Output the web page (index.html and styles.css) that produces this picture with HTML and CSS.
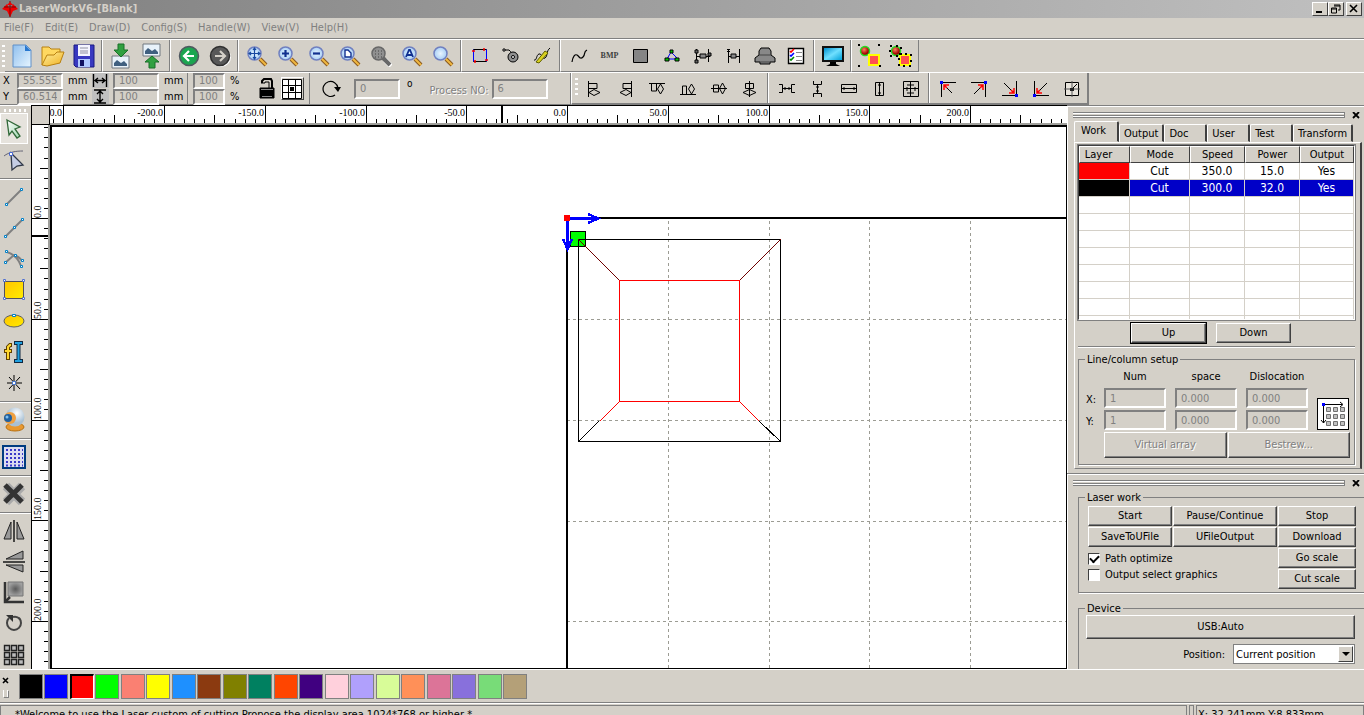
FILE: index.html
```html
<!DOCTYPE html>
<html lang="en">
<head>
<meta charset="utf-8">
<title>LaserWorkV6-[Blank]</title>
<link rel="stylesheet" href="styles.css">
</head>
<body>
<svg class="defs" aria-hidden="true">
  <defs>
    <linearGradient id="page" x1="0" y1="0" x2="1" y2="1"><stop offset="0" stop-color="#8fbfee"/><stop offset="1" stop-color="#e6f5ff"/></linearGradient>
    <linearGradient id="folder" x1="0" y1="0" x2="1" y2="1"><stop offset="0" stop-color="#fff0a0"/><stop offset="1" stop-color="#f0b020"/></linearGradient>
    <linearGradient id="gold" x1="0" y1="0" x2="1" y2="1"><stop offset="0" stop-color="#ffc400"/><stop offset="1" stop-color="#ffec00"/></linearGradient>
    <linearGradient id="screen" x1="0" y1="0" x2="1" y2="1"><stop offset="0" stop-color="#0090d0"/><stop offset=".5" stop-color="#70e0ff"/><stop offset="1" stop-color="#00a0d8"/></linearGradient>
    <linearGradient id="arrowgreen" x1="0" y1="0" x2="1" y2="1"><stop offset="0" stop-color="#fff"/><stop offset="1" stop-color="#a0d8b0"/></linearGradient>
    <radialGradient id="greenball"><stop offset="0" stop-color="#10b050"/><stop offset="1" stop-color="#20a050"/></radialGradient>
    <radialGradient id="lensfill"><stop offset="0" stop-color="#e8f4ff"/><stop offset="1" stop-color="#a8cff5"/></radialGradient>
    <radialGradient id="redball" cx=".4" cy=".35"><stop offset="0" stop-color="#ff8060"/><stop offset="1" stop-color="#a00000"/></radialGradient>
    <radialGradient id="whiteball" cx=".6" cy=".3"><stop offset="0" stop-color="#fff"/><stop offset="1" stop-color="#a8c0d4"/></radialGradient>
    <radialGradient id="graybox"><stop offset="0" stop-color="#5a5a5a"/><stop offset="1" stop-color="#a0a0a0"/></radialGradient>
    <g id="lens">
      <path d="M14 14l6 6" stroke="#8a5a20" stroke-width="4"/><path d="M14 14l6 6" stroke="#f0b840" stroke-width="2"/>
      <circle cx="8.500" cy="8.500" r="6.500" fill="url(#lensfill)" stroke="#7080c0" stroke-width="1.500"/>
    </g>
    <g id="picture"><path d="M0 0h17v12H0z" fill="#e8f2fa" stroke="#707880"/><path d="M2 10V7l3-3 4 3 3-2 3 3v2z" fill="#406080"/></g>
    <g id="selection">
      <circle cx="6" cy="6" r="4.500" fill="url(#redball)" stroke="#20e020" stroke-width="1.500"/>
      <path d="M10 10h10v10H10z" fill="#ff5050" stroke="#ff0" stroke-width="2"/>
    </g>
  </defs>
</svg>

<header class="titlebar">
  <svg class="logo" width="16" height="16" viewBox="0 0 16 16"><path d="M0 8l5-5 2 4h2l2-4 5 5-5 2-3 6-3-6z" fill="#f00000"/><path d="M8 0v16M2 6h12" stroke="#800000"/><path d="M8 1l3 3H5z" fill="#f00000"/></svg>
  <h1>LaserWorkV6-[Blank]</h1>
  <div class="winbuttons">
    <button aria-label="Minimize"><svg width="12" height="10"><path d="M2 8h6" stroke="#000" stroke-width="2"/></svg></button>
    <button aria-label="Restore"><svg width="12" height="10"><path d="M4 1h6v5H8M4 2h6M1.500 4h5v5h-5zM1 5h6" fill="none" stroke="#000"/></svg></button>
    <button class="close" aria-label="Close"><svg width="12" height="10"><path d="M2 1l7 7M9 1L2 8" stroke="#000" stroke-width="1.600"/></svg></button>
  </div>
</header>

<nav class="menubar">
  <button>File(F)</button><button>Edit(E)</button><button>Draw(D)</button><button>Config(S)</button><button>Handle(W)</button><button>View(V)</button><button>Help(H)</button>
</nav>

<div class="toolbar" role="toolbar" aria-label="Standard">
  <span class="grip"></span>
  <div class="group first">
    <button class="tool" aria-label="New"><svg width="22" height="24"><path d="M2 1h13l5 5v17H2z" fill="url(#page)" stroke="#6090c8"/><path d="M14 1v6h6z" fill="#2878d0"/></svg></button>
    <button class="tool" aria-label="Open"><svg width="24" height="24"><path d="M1 21V3h7l2 2h9v6" fill="#ffd860" stroke="#b88010"/><path d="M1 21l5-10h7l3-3h7l-4 11-13 3z" fill="url(#folder)" stroke="#b88010"/></svg></button>
    <button class="tool" aria-label="Save"><svg width="22" height="24"><path d="M1 1h20v22H3l-2-2z" fill="#3838c0" stroke="#181880"/><path d="M5 1h12v11H5z" fill="#f4f4ff"/><path d="M7 4h8M7 7h8M7 9h8" stroke="#9090a0"/><path d="M5 15h12v8H5z" fill="#b0c8ff"/><path d="M7 16h4v6H7z" fill="#101060"/></svg></button>
  </div>
  <div class="group">
    <button class="tool" aria-label="Import"><svg width="20" height="26"><use href="#picture" x="1" y="13"/><path d="M7 1h6v6h4l-7 7-7-7h4z" fill="#30a040" stroke="#187028"/></svg></button>
    <button class="tool" aria-label="Export"><svg width="20" height="26"><use href="#picture" x="1" y="1"/><path d="M7 25h6v-6h4l-7-6-7 6h4z" fill="#30a040" stroke="#187028"/></svg></button>
  </div>
  <div class="group">
    <button class="tool" aria-label="Undo"><svg width="24" height="24"><circle cx="12" cy="12" r="9.500" fill="url(#greenball)" stroke="#505860" stroke-width="1.500"/><path d="M17 12H8M12 7l-5 5 5 5" fill="none" stroke="#fff" stroke-width="2.200"/></svg></button>
    <button class="tool" aria-label="Redo"><svg width="24" height="24"><circle cx="13" cy="13" r="10" fill="#fff"/><circle cx="12" cy="12" r="9.500" fill="#585858" stroke="#303030" stroke-width="1.500"/><path d="M7 12h9M12 7l5 5-5 5" fill="none" stroke="#d4d0c8" stroke-width="2.200"/></svg></button>
  </div>
  <div class="group">
    <button class="tool" aria-label="Pan"><svg width="22" height="22"><use href="#lens"/><path d="M8.500 3v11M3 8.500h11M7 5l1.500-2L10 5M7 12l1.500 2 1.500-2M5 7L3 8.500 5 10M12 7l2 1.500-2 1.500" fill="none" stroke="#1848a0" stroke-width="1.200"/></svg></button>
    <button class="tool" aria-label="Zoom in"><svg width="22" height="22"><use href="#lens"/><path d="M5 8.500h7M8.500 5v7" stroke="#103090" stroke-width="2.200"/></svg></button>
    <button class="tool" aria-label="Zoom out"><svg width="22" height="22"><use href="#lens"/><path d="M5 8.500h7" stroke="#103090" stroke-width="2.200"/></svg></button>
    <button class="tool" aria-label="Zoom page"><svg width="22" height="22"><use href="#lens"/><path d="M6 5h3l3 3v4H6z" fill="#fff" stroke="#103090" stroke-width="1.400"/></svg></button>
    <button class="tool" aria-label="Zoom table"><svg width="22" height="22"><path d="M15 15l6 6" stroke="#fff" stroke-width="5"/><path d="M13 13l7 7" stroke="#686868" stroke-width="4"/><circle cx="8.500" cy="8.500" r="6.500" fill="#909090" stroke="#686868" stroke-width="1.500"/><path d="M5 6h8M5 9h8M5 12h8" stroke="#444" stroke-dasharray="1 2"/></svg></button>
    <button class="tool" aria-label="Zoom all"><svg width="22" height="22"><use href="#lens"/><path d="M5 12l3-7h1l3 7M6 10h5" fill="none" stroke="#103090" stroke-width="1.800"/></svg></button>
    <button class="tool" aria-label="Zoom selection"><svg width="22" height="22"><use href="#lens"/></svg></button>
  </div>
  <div class="group">
    <button class="tool" aria-label="Frame"><svg width="18" height="18"><path d="M2.500 2.500h13v12h-13z" fill="#c8c8c8" stroke="#00f"/><path d="M2.500 14.500h13M2.500 2.500h13" stroke="#000"/><path d="M1 4h3M4 13v3M13 1v3M14 13h3" stroke="#f00" stroke-width="1.500"/></svg></button>
    <button class="tool" aria-label="Laser head"><svg width="20" height="18"><path d="M3 3h5c2 2 3 3 4 4" fill="none" stroke="#000"/><path d="M2 2h2v2H2z" fill="#fff" stroke="#000"/><circle cx="12" cy="10" r="5" fill="#909090" stroke="#000"/><circle cx="12" cy="10" r="1.500" fill="#fff" stroke="#000"/></svg></button>
    <button class="tool" aria-label="Cut property"><svg width="18" height="18"><path d="M1 13c3 1 2-5 5-6s3 6 6 4 1-7 5-10" fill="none" stroke="#000"/><path d="M3 15L12 4l3 2-9 10z" fill="#d8d020" stroke="#606000"/></svg></button>
  </div>
  <div class="group">
    <button class="tool" aria-label="Smooth curve"><svg width="18" height="18"><path d="M2 15c1-6 3-8 5-7s3 5 6 2 0-5 4-7" fill="none" stroke="#000" stroke-width="1.200"/></svg></button>
    <button class="tool bmp">BMP</button>
    <button class="tool" aria-label="Fill"><svg width="16" height="16"><path d="M.5 1.500h14v13H.5z" fill="#858585" stroke="#000"/></svg></button>
    <button class="tool" aria-label="Nodes"><svg width="16" height="16"><path d="M7 4L3 11h11z" fill="none" stroke="#00f"/><path d="M6 2h3v3H6zM1 10h4v3H1zM11 10h4v3h-4z" fill="#00c000" stroke="#000"/></svg></button>
    <button class="tool" aria-label="Join"><svg width="18" height="16"><path d="M2.500 1v13M14.500 1v13M3 8.500h13" fill="none" stroke="#000"/><path d="M6 6h6v4H6z" fill="#888" stroke="#000"/><path d="M1 2h3v3H1zM1 12h3v3H1zM14 5h3v3h-3z" fill="#666" stroke="#000"/></svg></button>
    <button class="tool" aria-label="Offset"><svg width="16" height="16"><path d="M2.500 1v14M13.500 1v14M2 8.500h12M1 1l3 3M4 1L1 4" fill="none" stroke="#000"/><path d="M5 6h5v4H5z" fill="#888" stroke="#000"/></svg></button>
    <button class="tool" aria-label="Preview device"><svg width="22" height="18"><path d="M7 1h8l2 3v4l4 3v4h-5v2H6v-2H1v-4l4-3V4z" fill="#888" stroke="#000"/><path d="M5 8h12M6 15h10" stroke="#444"/></svg></button>
    <button class="tool" aria-label="Check list"><svg width="18" height="18"><path d="M1.500 1.500h15v15h-15z" fill="#fff" stroke="#000" stroke-width="1.400"/><path d="M3 4l1 1 3-3" fill="none" stroke="#f00" stroke-width="1.600"/><path d="M3 8l1 1 3-3" fill="none" stroke="#00f" stroke-width="1.600"/><path d="M3 12l1 1 3-3" fill="none" stroke="#080" stroke-width="1.600"/><path d="M9 5.500h6M9 9.500h6M9 13.500h6" stroke="#888"/></svg></button>
  </div>
  <div class="group">
    <button class="tool" aria-label="Preview"><svg width="24" height="22"><path d="M1 1h22v16H1z" fill="#111"/><path d="M3 3h18v12H3z" fill="url(#screen)"/><path d="M9 17h6v2l4 2H5l4-2z" fill="#000"/></svg></button>
  </div>
  <div class="group last">
    <button class="tool" aria-label="Group"><svg width="24" height="24"><use href="#selection" x="1" y="1"/><path d="M0 0h2v2H0zM20 0h2v2h-2zM0 21h2v2H0zM21 21h2v2h-2z"/></svg></button>
    <button class="tool" aria-label="Ungroup"><svg width="24" height="24"><use href="#selection" x="1" y="1"/><path d="M1 2h11v10H1zM10 10h12v12H10z" fill="none" stroke="#000" stroke-width="2" stroke-dasharray="2 4"/></svg></button>
  </div>
</div>

<div class="toolbar second" role="toolbar" aria-label="Object properties">
  <div class="props">
    <div class="pair">
      <label for="px">X</label><input id="px" class="w46" value="55.555" disabled><span class="unit">mm</span>
      <label for="py">Y</label><input id="py" class="w46" value="60.514" disabled><span class="unit">mm</span>
    </div>
    <div class="pair size">
      <span class="dim"><svg width="16" height="15"><path d="M1.500 1v13M14.500 1v13M3 7.500h10M6 5L3 7.500 6 10M10 5l3 2.500-3 2.500" fill="none" stroke="#000" stroke-width="1.400"/></svg></span><input class="w46" aria-label="Width" value="100" disabled><span class="unit">mm</span>
      <span class="dim"><svg width="16" height="15"><path d="M2 1h12M8 3v9M2 14h12M5 5l3-3 3 3M5 10l3 3 3-3" fill="none" stroke="#000" stroke-width="1.400"/></svg></span><input class="w46" aria-label="Height" value="100" disabled><span class="unit">mm</span>
    </div>
    <div class="pair percent">
      <input class="w32" aria-label="Horizontal scale" value="100" disabled><span class="unit">%</span>
      <input class="w32" aria-label="Vertical scale" value="100" disabled><span class="unit">%</span>
    </div>
    <button class="plain" aria-label="Lock ratio"><svg width="18" height="22"><path d="M4 5V3l2-2h7l1 2v7" fill="none" stroke="#000" stroke-width="2"/><path d="M3 5h4V4h4v6" fill="none" stroke="#000"/><path d="M2 10h14v10H2z" stroke="#000"/><path d="M3 11.500h12M4 18.500h10" stroke="#888"/></svg></button>
    <button class="raised" aria-label="Anchor"><svg width="20" height="20"><path d="M.5.500h19v19H.5z" fill="#fff" stroke="#000"/><path d="M6.500 0v20M13.500 0v20M0 6.500h20M0 13.500h20" stroke="#000"/><path d="M8 8h4v4H8z"/></svg></button>
    <div class="rotate">
      <svg width="20" height="20"><path d="M16 9a7.500 7.500 0 1 0-3 7" fill="none" stroke="#000" stroke-width="1.200"/><path d="M12 8h7l-3 5z"/></svg>
      <input class="w46 tall" aria-label="Rotation" value="0" disabled>
      <span class="degree">o</span>
    </div>
    <label class="embossed process" for="proc">Process NO:</label><input id="proc" class="w56 tall" value="6" disabled>
  </div>
  <div class="align">
    <span class="grip"></span>
    <div class="group first">
      <button class="tool" aria-label="Align left"><svg width="16" height="16"><path d="M1.500 0v16M2 2.500h8v5H2M2 11.500l5-3 6 3-6 3z" fill="none" stroke="#000"/></svg></button>
      <button class="tool" aria-label="Align right"><svg width="16" height="16"><path d="M13.500 0v16M13 2.500H5v5h8M13 11.500l-5-3-6 3 6 3z" fill="none" stroke="#000"/></svg></button>
      <button class="tool" aria-label="Align top"><svg width="16" height="16"><path d="M0 2.500h16M2.500 3v7h5V3M11.500 3l3 5-3 5-3-5z" fill="none" stroke="#000"/></svg></button>
      <button class="tool" aria-label="Align bottom"><svg width="16" height="16"><path d="M0 13.500h16M2.500 13V5h4v8M11.500 13l3-5-3-5-3 5z" fill="none" stroke="#000"/></svg></button>
      <button class="tool" aria-label="Center vertical"><svg width="16" height="16"><path d="M0 7.500h16M2.500 4v7h5V4zM11.500 2l3 5.500-3 5.500-3-5.500z" fill="none" stroke="#000"/></svg></button>
      <button class="tool" aria-label="Center horizontal"><svg width="16" height="16"><path d="M7.500 0v16M3.500 2.500h8v5h-8zM1 11.500l6.500-3 6.500 3-6.500 3z" fill="none" stroke="#000"/></svg></button>
    </div>
    <div class="group">
      <button class="tool" aria-label="Space horizontally"><svg width="16" height="16"><path d="M0 3.500h3.500v8H0M16 3.500h-3.500v8H16M4 7.500h8M6 6v3M10 6v3" fill="none" stroke="#000"/></svg></button>
      <button class="tool" aria-label="Space vertically"><svg width="16" height="16"><path d="M3.500 0v3.500h8V0M3.500 16v-3.500h8V16M7.500 4v8M6 6h3M6 10h3" fill="none" stroke="#000"/></svg></button>
      <button class="tool" aria-label="Same width"><svg width="16" height="16"><path d="M.5 3.500h15v8H.5zM1 7.500h14M3 6v3M13 6v3" fill="none" stroke="#000"/></svg></button>
      <button class="tool" aria-label="Same height"><svg width="16" height="16"><path d="M3.500 1.500h8v13h-8zM7.500 2v12M6 4h3M6 12h3" fill="none" stroke="#000"/></svg></button>
      <button class="tool" aria-label="Same size"><svg width="16" height="16"><path d="M.5.500h15v15H.5zM7.500 0v16M0 7.500h16M4 4h7M4 12h7M4 6v4M12 6v4" fill="none" stroke="#000"/></svg></button>
    </div>
    <div class="group last">
      <button class="tool" aria-label="To top left"><svg width="18" height="18"><path d="M2.500 17V2.500H17M5 5l8 8" fill="none" stroke="#000"/><path d="M5 10V5h5M5 5l3 3" fill="none" stroke="#f00" stroke-width="1.500"/><path d="M1 1h3v3H1z" fill="#00f"/></svg></button>
      <button class="tool" aria-label="To top right"><svg width="18" height="18"><path d="M15.500 17V2.500H1M13 5l-9 9" fill="none" stroke="#000"/><path d="M8 5h5v5M13 5l-3 3" fill="none" stroke="#f00" stroke-width="1.500"/><path d="M14 1h3v3h-3z" fill="#00f"/></svg></button>
      <button class="tool" aria-label="To bottom right"><svg width="18" height="18"><path d="M15.500 1v14.500H1M3 3l10 10" fill="none" stroke="#000"/><path d="M8 13h5V8M13 13l-3-3" fill="none" stroke="#f00" stroke-width="1.500"/><path d="M14 14h3v3h-3z" fill="#00f"/></svg></button>
      <button class="tool" aria-label="To bottom left"><svg width="18" height="18"><path d="M2.500 1v14.500H17M15 3L5 13" fill="none" stroke="#000"/><path d="M10 13H5V8M5 13l3-3" fill="none" stroke="#f00" stroke-width="1.500"/><path d="M1 14h3v3H1z" fill="#00f"/></svg></button>
      <button class="tool" aria-label="To center"><svg width="16" height="16"><path d="M1.500 1.500h13v13h-13z" fill="#e8e4dc" stroke="#000"/><path d="M8 0v16M0 8h16" stroke="#555"/><path d="M8 8l5-5" stroke="#000"/><path d="M6 7h4v3H6z" fill="#222"/></svg></button>
    </div>
  </div>
</div>

<main class="workspace">
  <div class="drawtools" role="toolbar" aria-label="Draw">
    <span class="grip"></span>
    <div class="vgroup">
      <button class="tool selected" aria-label="Pick"><svg width="20" height="22"><path d="M3 2l13 7-5 2 5 7-3 2-5-7-3 4z" fill="url(#arrowgreen)" stroke="#306838" stroke-width="1.300"/></svg></button>
      <button class="tool" aria-label="Edit node"><svg width="22" height="24"><path d="M1 8c5-4 12-5 19-5" fill="none" stroke="#667"/><path d="M8 5l12 12-6 1-5 4z" fill="#c4cce4" stroke="#303848" stroke-width="1.300"/><path d="M6.500 4.500h3v3h-3z" fill="#fff" stroke="#4868d0"/></svg></button>
    </div>
    <div class="vgroup">
      <button class="tool" aria-label="Line"><svg width="22" height="22"><path d="M3.500 18.500l15-15" stroke="#808080" stroke-width="2"/><path d="M2.500 17.500h2v2h-2zM17.500 2.500h2v2h-2z" fill="#fff" stroke="#0080c8"/></svg></button>
      <button class="tool" aria-label="Polyline"><svg width="22" height="22"><path d="M2.500 19.500l17-17" stroke="#808080" stroke-width="2"/><path d="M1.500 18.500h2v2h-2zM18.500 1.500h2v2h-2zM10.500 9.500h2v2h-2z" fill="#fff" stroke="#0080c8"/></svg></button>
      <button class="tool" aria-label="Curve"><svg width="22" height="22"><path d="M2 15L11 7c4 1 6 3 8 6M4 4c6 2 11 5 14 14" fill="none" stroke="#808080" stroke-width="2"/><path d="M1.500 13.500h2v2h-2zM2.500 2.500h2v2h-2zM11.500 6.500h2v2h-2zM18.500 11.500h2v2h-2zM17.500 17.500h2v2h-2z" fill="#fff" stroke="#0080c8"/></svg></button>
      <button class="tool" aria-label="Rectangle"><svg width="22" height="22"><path d="M1.500 2.500h19v17h-19z" fill="url(#gold)" stroke="#505060"/><path d="M.5.500h2v2h-2zM19.500.500h2v2h-2zM.5 18.500h2v2h-2zM19.500 18.500h2v2h-2z" fill="#fff" stroke="#5070d0"/></svg></button>
      <button class="tool" aria-label="Ellipse"><svg width="22" height="16"><ellipse cx="11" cy="8" rx="10" ry="6" fill="url(#gold)" stroke="#606060"/><path d="M9.500 1.500h3v2h-3z" fill="#fff" stroke="#0080c8"/></svg></button>
      <button class="tool" aria-label="Text"><svg width="22" height="22"><path d="M9 4H7L5 6v13M1 10h8" fill="none" stroke="#604000" stroke-width="4"/><path d="M8 4H7L5 6v12M2 10h6" fill="none" stroke="#ffd830" stroke-width="2"/><path d="M11 2h9M11 20h9M15.500 2v18" stroke="#102840" stroke-width="4"/><path d="M12 2h7M12 20h7M15.500 2v18" stroke="#20a0e0" stroke-width="2"/></svg></button>
      <button class="tool" aria-label="Point"><svg width="22" height="18"><path d="M11 1v16M4 9h15M6 3l11 12M17 3L6 15" stroke="#000"/><path d="M9.500 7.500h3v3h-3z" fill="#fff" stroke="#4878d0"/></svg></button>
    </div>
    <div class="vgroup">
      <button class="tool" aria-label="Camera"><svg width="24" height="26"><ellipse cx="13" cy="20" rx="9" ry="4" fill="#e89830" stroke="#b87010"/><circle cx="13" cy="10" r="9.500" fill="url(#whiteball)"/><circle cx="8" cy="11" r="6" fill="#f0a040"/><circle cx="6" cy="11" r="4" fill="#2060a0"/><circle cx="5" cy="10" r="1.500" fill="#80c0f0"/></svg></button>
    </div>
    <div class="vgroup">
      <button class="tool" aria-label="Array"><svg width="24" height="24"><path d="M1 1h22v22H1z" fill="#dcdcf0" stroke="#003c80" stroke-width="2"/><path d="M4 5h17M4 9h17M4 13h17M4 17h17M4 20.500h17" stroke="#3838c8" stroke-width="2" stroke-dasharray="2 2"/></svg></button>
    </div>
    <div class="vgroup">
      <button class="tool" aria-label="Delete"><svg width="24" height="24"><path d="M4 4l16 16M20 4L4 20" stroke="#aaa" stroke-width="9"/><path d="M3 3l17 17M20 3L3 20" stroke="#333" stroke-width="5"/></svg></button>
    </div>
    <div class="vgroup">
      <button class="tool" aria-label="Mirror horizontal"><svg width="24" height="24"><path d="M9 3v17H2zM15 3v17h7z" fill="#999" stroke="#222"/><path d="M12 1v22" stroke="#222" stroke-width="1.600"/></svg></button>
      <button class="tool" aria-label="Mirror vertical"><svg width="24" height="24"><path d="M21 1v8H4zM21 22v-7H4z" fill="#999" stroke="#222"/><path d="M1 12h22" stroke="#222" stroke-width="1.600"/></svg></button>
      <button class="tool" aria-label="Dock to table"><svg width="24" height="24"><path d="M6 1h15v14H6z" fill="url(#graybox)" stroke="#777"/><path d="M3 1v20h19" fill="none" stroke="#333" stroke-width="2.500"/><path d="M3 21l5-5" stroke="#333" stroke-width="2.500"/></svg></button>
      <button class="tool" aria-label="Rotate"><svg width="22" height="20"><path d="M6 4a7 7 0 1 0 10 0" fill="none" stroke="#444" stroke-width="2"/><path d="M3 1h7v7z" fill="#333"/><path d="M10 3c3-1 5 0 7 2" fill="none" stroke="#444" stroke-width="2"/></svg></button>
      <button class="tool" aria-label="Grid copy"><svg width="22" height="22"><path d="M1.500 1.500h5v5h-5zM8.500 1.500h5v5h-5zM15.500 1.500h5v5h-5zM1.500 8.500h5v5h-5zM8.500 8.500h5v5h-5zM15.500 8.500h5v5h-5zM1.500 15.500h5v5h-5zM8.500 15.500h5v5h-5zM15.500 15.500h5v5h-5z" fill="#bbb" stroke="#222" stroke-width="1.400"/></svg></button>
    </div>
  </div>

  <div class="drawing">
    <div class="corner"></div>
    <svg class="ruler top" id="ruler-top"></svg>
    <svg class="ruler side" id="ruler-side"></svg>
    <div class="canvas">
      <svg class="sheet" shape-rendering="crispEdges">
        <g transform="translate(515 91)">
          <path d="M101.500 3v2000M202.500 3v2000M302.500 3v2000M403.500 3v2000M504.500 3v2000" class="gridline"/>
          <path d="M0 101.500h3000M0 202.500h3000M0 303.500h3000M0 403.500h3000" class="gridline"/>
          <path d="M0 2000V0H3000" class="bed"/>
          <path d="M3.500 13.500h15v15h-15z" fill="#00ff00" stroke="#000"/>
          <path d="M11.500 21.500h202v202h-202z" fill="none" stroke="#000"/>
          <path d="M11.500 21.500l41 41M213.500 21.500l-41 41" stroke="#700000"/>
          <path d="M31.500 203.500l-20 20M192.500 203.500l21 20" stroke="#000"/>
          <path d="M52.500 62.500h120v121h-120zM52.500 183.500l-20 20M172.500 183.500l20 20" fill="none" stroke="#ff0000"/>
          <path d="M0 .5H28M.5 0V28" stroke="#0000ff" stroke-width="3"/>
          <path d="M21-4L31 .5 21 5M-4 21L.5 31 5 21" fill="none" stroke="#0000ff" stroke-width="2.500"/>
          <path d="M-3-3h6v6h-6z" fill="#ff0000"/>
        </g>
      </svg>
    </div>
  </div>

  <aside class="dock">
    <section class="panel work">
      <div class="handle"><span></span><button aria-label="Close panel"><svg width="8" height="7"><path d="M1 0l6 6M7 0L1 6" stroke="#000" stroke-width="1.800"/></svg></button></div>
      <div class="tabs" role="tablist">
        <button role="tab" class="active" aria-selected="true">Work</button><button role="tab" class="t2">Output</button><button role="tab">Doc</button><button role="tab">User</button><button role="tab">Test</button><button role="tab" class="t6">Transform</button>
      </div>
      <div class="tabpage">
        <div class="layers">
          <table>
            <thead><tr><th class="c1">Layer</th><th class="c2">Mode</th><th class="c3">Speed</th><th class="c3">Power</th><th>Output</th></tr></thead>
            <tbody>
              <tr><td class="red"></td><td>Cut</td><td>350.0</td><td>15.0</td><td>Yes</td></tr>
              <tr class="current"><td class="black"></td><td>Cut</td><td>300.0</td><td>32.0</td><td>Yes</td></tr>
              <tr><td></td><td></td><td></td><td></td><td></td></tr>
              <tr><td></td><td></td><td></td><td></td><td></td></tr>
              <tr><td></td><td></td><td></td><td></td><td></td></tr>
              <tr><td></td><td></td><td></td><td></td><td></td></tr>
              <tr><td></td><td></td><td></td><td></td><td></td></tr>
              <tr><td></td><td></td><td></td><td></td><td></td></tr>
              <tr><td></td><td></td><td></td><td></td><td></td></tr>
              <tr><td></td><td></td><td></td><td></td><td></td></tr>
            </tbody>
          </table>
        </div>
        <div class="updown"><button class="btn default">Up</button><button class="btn">Down</button></div>
        <hr>
        <fieldset class="setup">
          <legend>Line/column setup</legend>
          <div class="matrix">
            <span class="head n">Num</span><span class="head">space</span><span class="head">Dislocation</span>
            <span class="axis">X:</span><input aria-label="X num" value="1" disabled><input aria-label="X space" value="0.000" disabled><input aria-label="X dislocation" value="0.000" disabled>
            <span class="axis">Y:</span><input aria-label="Y num" value="1" disabled><input aria-label="Y space" value="0.000" disabled><input aria-label="Y dislocation" value="0.000" disabled>
            <button class="arraybtn" aria-label="Array direction"><svg width="30" height="30"><path d="M5.500 5.500H24M5.500 6v18M22 3l3 2.500L22 8M3 21l2.500 3L8 21" fill="none" stroke="#000"/><path d="M8.500 8.500h4v4h-4zM15.500 8.500h4v4h-4zM22.500 8.500h4v4h-4zM8.500 15.500h4v4h-4zM15.500 15.500h4v4h-4zM22.500 15.500h4v4h-4zM8.500 22.500h4v4h-4zM15.500 22.500h4v4h-4zM22.500 22.500h4v4h-4z" fill="#c0c0c0" stroke="#707070"/><path d="M4 4h3v3H4z" fill="#00f"/></svg></button>
          </div>
          <div class="arrayrow"><button class="btn" disabled>Virtual array</button><button class="btn" disabled>Bestrew...</button></div>
        </fieldset>
      </div>
    </section>
    <section class="panel laser">
      <div class="handle"><span></span><button aria-label="Close panel"><svg width="8" height="7"><path d="M1 0l6 6M7 0L1 6" stroke="#000" stroke-width="1.800"/></svg></button></div>
      <fieldset class="open laserwork">
        <legend>Laser work</legend>
        <div class="jobs">
          <button class="btn">Start</button><button class="btn">Pause/Continue</button><button class="btn">Stop</button>
          <button class="btn">SaveToUFile</button><button class="btn">UFileOutput</button><button class="btn">Download</button>
          <div class="checks">
            <label><input type="checkbox" checked>Path optimize</label>
            <label><input type="checkbox">Output select graphics</label>
          </div>
          <button class="btn">Go scale</button>
          <button class="btn">Cut scale</button>
        </div>
      </fieldset>
      <fieldset class="open device">
        <legend>Device</legend>
        <button class="btn usb">USB:Auto</button>
        <div class="position"><label for="pos">Position:</label><span class="selectbox"><select id="pos"><option>Current position</option></select><i class="arrow"></i></span></div>
      </fieldset>
    </section>
  </aside>
</main>

<div class="palette">
  <div class="palhandle"><button aria-label="Close palette"><svg width="8" height="7"><path d="M1 1l5 5M6 1L1 6" stroke="#000" stroke-width="1.600"/></svg></button><span></span></div>
  <div class="swatches" id="swatches"></div>
</div>

<footer class="status"><span class="message">*Welcome to use the Laser custom of cutting,Propose the display area 1024*768 or higher *</span><span class="spacer"></span><span class="coords">X: 32.241mm,Y:8.833mm</span></footer>
<script src="app.js"></script>
</body>
</html>
```

FILE: styles.css
```css
* { box-sizing: border-box; }
body {
  margin: 0; height: 100vh; overflow: hidden; display: flex; flex-direction: column;
  background: #d4d0c8; color: #000;
  font: 11px/13px "DejaVu Sans Condensed", "Noto Sans", sans-serif;
}
button, input, select { font: inherit; color: inherit; margin: 0; padding: 0; border: 0; border-radius: 0; background: transparent; }
button svg, .logo, .dim svg, .rotate svg { display: block; flex: none; }
.defs { position: absolute; width: 0; height: 0; }

.titlebar { flex: none; display: flex; align-items: center; height: 18px; padding: 0 2px; background: linear-gradient(90deg, #808080, #c0c0c0); }
.titlebar h1 { flex: 1; margin: 0 0 0 1px; font-size: 11px; line-height: 18px; color: #d4d0c8; }
.winbuttons { display: flex; }
.winbuttons button { width: 16px; height: 14px; padding: 1px; background: #d4d0c8; border: 1px solid; border-color: #fff #404040 #404040 #fff; }
.winbuttons .close { margin-left: 2px; }

.menubar { flex: none; display: flex; gap: 11px; height: 21px; padding: 0 4px; border-bottom: 1px solid #808080; }
.menubar button { color: #808080; line-height: 20px; }

.toolbar { flex: none; display: flex; height: 33px; border-top: 1px solid #fff; }
.toolbar::after { content: ""; flex: 1; }
.grip { flex: none; width: 3px; margin: 5px 0 5px 2px; background: repeating-linear-gradient(#fff 0 2px, transparent 2px 5px); }
.group { display: flex; padding: 0 2px; border-left: 1px solid #fff; border-right: 1px solid #808080; border-bottom: 1px solid #808080; }
.group.first { border-left: 0; padding-left: 1px; }
.tool { flex: none; width: 31px; height: 31px; display: flex; align-items: center; justify-content: center; }
.bmp { font: bold 8px/12px "Liberation Serif", serif; color: #404040; }

.props { display: flex; align-items: center; width: 571px; padding: 0 3px; border-right: 1px solid #808080; border-bottom: 1px solid #808080; }
.pair { flex: none; display: grid; grid-template-columns: 14px 46px 24px; grid-auto-rows: 16px; align-items: center; }
.pair .unit { padding-left: 5px; }
.pair.size { grid-template-columns: 21px 46px 28px; margin-left: 5px; border-right: 1px solid #808080; }
.pair.percent { grid-template-columns: 32px 25px; margin-left: 5px; }
.dim { width: 17px; background: #c0c0c0; }
.w46 { width: 46px; }
.w32 { width: 32px; }
.w56 { width: 56px; }
input:disabled { height: 16px; padding: 0 4px; color: #808080; border: 2px solid; border-color: #808080 #fff #fff #808080; line-height: 12px; opacity: 1; }
input.tall:disabled { height: 20px; }
.plain { margin-left: 8px; width: 18px; }
.raised { margin-left: 5px; width: 23px; height: 23px; background: #d4d0c8; border: 1px solid; border-color: #fff #404040 #404040 #fff; }
.rotate { display: flex; align-items: center; margin-left: 5px; padding-left: 12px; height: 100%; border-left: 1px solid #808080; }
.rotate input { margin-left: 12px; }
.degree { margin: 0 0 10px 7px; font-size: 10px; }
.process { width: 62px; margin-left: 17px; padding-top: 4px; white-space: nowrap; }
.embossed { color: #808080; text-shadow: 1px 1px #fff; }
.align { display: flex; border-bottom: 2px solid #808080; border-right: 1px solid #808080; border-left: 1px solid #fff; padding-left: 1px; }
.align .group { border-bottom: 0; }
.align .group.last { padding-right: 0; }

.workspace { flex: 1; min-height: 0; display: flex; }
.drawtools { flex: none; width: 31px; display: flex; flex-direction: column; overflow: hidden; border-top: 1px solid #fff; }
.drawtools .grip { width: 24px; height: 3px; margin: 3px 0 1px 4px; background: repeating-linear-gradient(90deg, #fff 0 2px, transparent 2px 5px); }
.drawtools .tool { width: 28px; }
.drawtools .selected { border: 1px solid #fff; background: #e6e3dd; }
.vgroup + .vgroup { margin-top: 3px; padding-top: 2px; border-top: 1px solid #808080; box-shadow: inset 0 1px #fff; }

.drawing { flex: 1; min-width: 0; display: grid; grid-template-columns: 19px 1fr; grid-template-rows: 19px 1fr; border-top: 1px solid #000; }
.corner { border-left: 1px solid #000; border-right: 1px solid #000; border-bottom: 1px solid #000; }
.ruler { display: block; width: 100%; height: 100%; background: #fff; font: 10px "Liberation Serif", serif; overflow: hidden; }
.ruler.top { border-bottom: 2px solid #a0a09c; }
.ruler.side { border-left: 1px solid #000; border-right: 2px solid #a0a09c; }
.canvas { position: relative; min-height: 0; background: #fff; border: 1px solid #000; border-width: 2px 1px 1px 2px; }
.sheet { position: absolute; inset: 0; width: 100%; height: 100%; }
.gridline { stroke: #9c9c94; stroke-dasharray: 3 3; }
.bed { fill: none; stroke: #000; stroke-width: 2; }

.dock { flex: none; width: 297px; display: flex; flex-direction: column; overflow: hidden; }
.panel { flex: none; border: 1px solid #808080; border-width: 1px 0 0 0; box-shadow: inset 1px 1px #fff; }
.panel.work { height: 368px; padding: 0 2px 0 7px; }
.panel.laser { flex: 1; padding: 0 0 0 7px; border-bottom: 1px solid #808080; }
.handle { display: flex; align-items: center; gap: 5px; height: 16px; padding-top: 2px; margin-left: -1px; }
.handle span { flex: 1; height: 6px; border: 1px solid #808080; border-width: 1px 1px 1px 0; background: linear-gradient(#fff 0 1px, #d4d0c8 1px 2px, #808080 2px 3px, #fff 3px); }
.handle button { width: 12px; padding: 1px 2px; }
.laser .handle { margin-right: 2px; }
.tabs { display: flex; align-items: flex-end; height: 20px; padding-right: 9px; }
.tabs button { height: 18px; padding: 0 0 0 4px; text-align: left; border: 1px solid; border-color: #fff #404040 transparent #fff; border-right-width: 2px; border-radius: 2px 2px 0 0; flex: 42 1 0; white-space: nowrap; }
.tabs .t2 { flex-grow: 45; }
.tabs .t6 { flex-grow: 62; }
.tabs .active { height: 21px; flex: 0 0 45px; padding: 0 0 3px 6px; }
.tabpage { height: 327px; padding: 2px 5px 0 3px; border: 1px solid; border-color: #fff #404040 #808080 #fff; border-right-width: 2px; }
.layers { height: 175px; overflow: hidden; background: #fff; border: 1px solid; border-color: #404040 #fff #fff #404040; outline: 1px solid #808080; outline-offset: 0; }
table { width: 100%; border-collapse: separate; border-spacing: 0; table-layout: fixed; }
.c1 { width: 51px; }
.c2 { width: 60px; }
.c3 { width: 55px; }
th { height: 17px; padding: 0; font-weight: normal; line-height: 14px; background: #d4d0c8; border: 1px solid; border-color: #fff #404040 #404040 #fff; }
th.c1 { padding-right: 12px; }
td { height: 17px; padding: 0; text-align: center; font-size: 12px; line-height: 15px; border: 1px solid #d4d0c8; border-width: 0 1px 1px 0; }
.red { background: #ff0000; }
.black { background: #000; }
.current td:not(.black) { background: #0000c8; color: #fff; }
.btn { height: 20px; line-height: 14px; background: #d4d0c8; border: 1px solid; border-color: #fff #404040 #404040 #fff; box-shadow: inset -1px -1px #808080; text-align: center; white-space: nowrap; }
.btn:disabled { color: #808080; text-shadow: 1px 1px #fff; }
.updown { display: flex; gap: 10px; padding: 3px 0 0 53px; }
.updown .btn { width: 75px; }
.btn.default { outline: 1px solid #000; }
hr { margin: 3px 0 0; border: 0; height: 2px; background: linear-gradient(#808080 50%, #fff 50%); }
fieldset { min-width: 0; margin: 0; padding: 0; border: 1px solid #808080; box-shadow: 1px 1px #fff, inset 0 0 0 1px #d4d0c8; }
legend { margin-left: 6px; padding: 0 2px; height: 13px; background: #d4d0c8; }
.setup { margin-top: 5px; height: 112px; }
.matrix { display: grid; grid-template-columns: 16px 62px 62px 62px 32px; column-gap: 9px; grid-template-rows: 20px 20px 20px; row-gap: 2px; align-items: center; }
.head { text-align: center; padding-top: 1px; }
.head.n { grid-column: 2; }
.axis { grid-column: 1; padding: 3px 0 0 7px; }
.matrix input:disabled { width: 62px; height: 20px; }
.arraybtn { grid-column: 5; grid-row: 2 / 4; width: 32px; height: 32px; align-self: end; background: #fff; border: 1px solid #000; }
.arrayrow { display: grid; grid-template-columns: 1fr 1fr; gap: 1px; margin: 2px 4px 0 25px; }
.arrayrow .btn { height: 26px; }
.open { margin-left: 4px; border-right: 0; }
.laserwork { margin-top: 1px; height: 102px; }
.jobs { display: grid; grid-template-columns: 84px 104px 78px; grid-template-rows: 20px 20px 20px 20px; row-gap: 1px; margin: 2px 0 0 9px; column-gap: 1px; }
.checks { grid-row: 3 / 5; grid-column: 1 / 3; display: flex; flex-direction: column; gap: 3px; padding-top: 4px; }
.checks label { display: flex; align-items: center; gap: 5px; height: 13px; }
.checks input { appearance: none; width: 12px; height: 12px; background: #fff; border: 1px solid; border-color: #404040 #fff #fff #404040; display: grid; place-items: center; }
.checks input:checked::before { content: ""; width: 7px; height: 4px; margin-bottom: 2px; border: solid #000; border-width: 0 0 2px 2px; rotate: -45deg; }
.device { margin-top: 9px; height: 80px; border-bottom: 0; box-shadow: none; }
.usb { width: 269px; height: 24px; margin: 0 0 0 7px; display: block; }
.position { display: flex; align-items: center; justify-content: flex-end; gap: 8px; padding: 5px 9px 0 0; }
.selectbox { position: relative; width: 122px; height: 20px; background: #fff; border: 1px solid; border-color: #404040 #fff #fff #404040; outline: 1px solid #808080; outline-offset: -1px; }
.selectbox select { appearance: none; width: 100%; height: 18px; padding-left: 2px; }
.arrow { position: absolute; right: 1px; top: 1px; width: 15px; height: 16px; display: grid; place-items: center; background: #d4d0c8; border: 1px solid; border-color: #fff #404040 #404040 #fff; pointer-events: none; }
.arrow::before { content: ""; border: 4px solid transparent; border-top-color: #000; border-bottom: 0; }

.palette { flex: none; display: flex; height: 34px; border-top: 1px solid #fff; border-bottom: 1px solid #808080; }
.palhandle { width: 19px; padding: 7px 2px; }
.palhandle button { display: block; width: 8px; height: 7px; }
.palhandle span { display: block; width: 5px; height: 7px; margin: 6px 0 0 1px; border: 1px solid #fff; border-width: 0 1px 0 1px; box-shadow: 1px 1px #808080; }
.swatches { display: flex; gap: 1px; padding-top: 4px; }
.swatch { width: 24px; height: 25px; border: 1px solid #808080; }
.swatch:nth-child(2n) { margin-right: 1px; }
.swatch.on { border: solid; border-width: 2px 1px 1px 2px; border-color: #000 #fff #fff #000; }

.status { flex: none; height: 12px; display: flex; gap: 2px; border-top: 1px solid #fff; overflow: hidden; white-space: nowrap; }
.status span { border: 1px solid #808080; border-width: 1px 1px 0 1px; line-height: 13px; padding-top: 2px; margin-top: 1px; height: 20px; }
.status .message { flex: 1; padding-left: 14px; }
.spacer { width: 5px; }
.status .coords { width: 168px; padding-left: 1px; }
```

FILE: app.js
```js
const NS = "http://www.w3.org/2000/svg";
const STEP = 100.75 / 50;

function add(parent, name, attrs, text) {
  const node = document.createElementNS(NS, name);
  for (const key in attrs) node.setAttribute(key, attrs[key]);
  if (text) node.textContent = text;
  parent.append(node);
}

function ruler(svg, origin, depth, vertical, cursor) {
  const length = vertical ? svg.clientHeight : svg.clientWidth;
  for (let unit = -1000; unit <= 2000; unit += 5) {
    const at = Math.round(origin + unit * STEP);
    if (at < 0 || at > length) continue;
    const size = unit % 50 === 0 ? depth : unit % 25 === 0 ? 8 : 4;
    const near = depth - size;
    add(svg, "rect", vertical
      ? { x: near, y: at, width: size, height: 1 }
      : { x: at, y: near, width: 1, height: size });
    if (unit % 50 === 0) {
      const label = unit.toFixed(1);
      add(svg, "text", vertical
        ? { transform: `translate(9 ${at}) rotate(-90)`, "text-anchor": "start" }
        : { x: at - 1, y: 10, "text-anchor": "end" }, label);
    }
  }
  add(svg, "rect", vertical
    ? { x: 0, y: cursor, width: depth, height: 2 }
    : { x: cursor, y: 0, width: 2, height: depth });
}

ruler(document.getElementById("ruler-top"), 517, 17, false, 451);
ruler(document.getElementById("ruler-side"), 93, 16, true, 110);

const colors = ["#000000", "#0000ff", "#ff0000", "#00ff00", "#fa8072", "#ffff00", "#1e90ff", "#8b3a10", "#808000", "#008060",
  "#ff4500", "#400080", "#ffd0dc", "#b0a0fc", "#d8fc98", "#ff9058", "#dc7498", "#8870dc", "#78dc78", "#b4a078"];
const box = document.getElementById("swatches");
colors.forEach((color, i) => {
  const b = document.createElement("button");
  b.className = i === 2 ? "swatch on" : "swatch";
  b.style.backgroundColor = color;
  b.setAttribute("aria-label", "Layer color " + color);
  box.append(b);
});
```
